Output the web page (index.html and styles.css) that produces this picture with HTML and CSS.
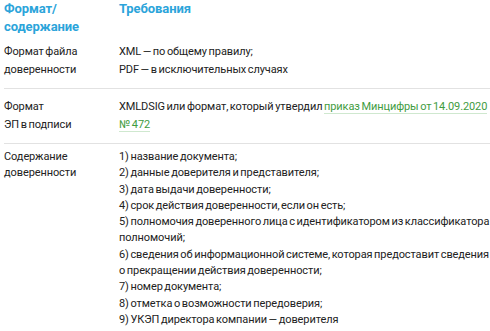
FILE: index.html
```html
<!DOCTYPE html>
<html>
<head>
	<title>Требования к доверенности</title>
	<meta charset="utf-8">
	<meta name="viewport" content="width=device-width, initial-scale=1">
	<link rel="stylesheet" href="styles.css">
</head>
<body>
	<div class="table">
		<div class="row head">
			<div class="cell">Формат/<br>содержание</div>
			<div class="cell">Требования</div>
		</div>

		<div class="row first">
			<div class="cell">Формат файла<br>доверенности</div>
			<div class="cell">XML — по общему правилу;<br>PDF — в исключительных случаях</div>
		</div>

		<div class="row">
			<div class="cell">Формат<br>ЭП в подписи</div>
			<div class="cell">XMLDSIG или формат, который утвердил <a href="#">приказ Минцифры от 14.09.2020 № 472</a></div>
		</div>

		<div class="row last">
			<div class="cell">Содержание<br>доверенности</div>
			<div class="cell list">
				<p>1) название документа;</p>
				<p>2) данные доверителя и представителя;</p>
				<p>3) дата выдачи доверенности;</p>
				<p>4) срок действия доверенности, если он есть;</p>
				<p>5) полномочия доверенного лица с идентификатором из классификатора полномочий;</p>
				<p>6) сведения об информационной системе, которая предоставит сведения о прекращении действия доверенности;</p>
				<p>7) номер документа;</p>
				<p>8) отметка о возможности передоверия;</p>
				<p>9) УКЭП директора компании — доверителя</p>
			</div>
		</div>
	</div>
</body>
</html>
```

FILE: styles.css
```css
body {
	margin: 0;
	font-family: Roboto, "Noto Sans", sans-serif;
	font-size: 11px;
	letter-spacing: -0.1px;
	word-spacing: -1px;
	line-height: 18px;
	color: #222;
	background: #fff;
}

.table {
	padding: 0 0 0 4px;
}

.row {
	display: grid;
	grid-template-columns: 115px 1fr;
	padding: 9px 0;
	border-bottom: 1px solid #e2e2e2;
}

.row.first {
	padding-top: 7px;
}

.row.last {
	padding-top: 5px;
	border-bottom: none;
	line-height: 16.3px;
}

.head {
	padding: 0;
	border-bottom: none;
	font-size: 13px;
	letter-spacing: -0.1px;
	word-spacing: 0;
	font-weight: bold;
	color: #2ba4da;
}

.list p {
	margin: 0;
}

a {
	color: #3f9c3f;
	text-decoration: none;
	border-bottom: 1px solid #cfe8cf;
}
```
